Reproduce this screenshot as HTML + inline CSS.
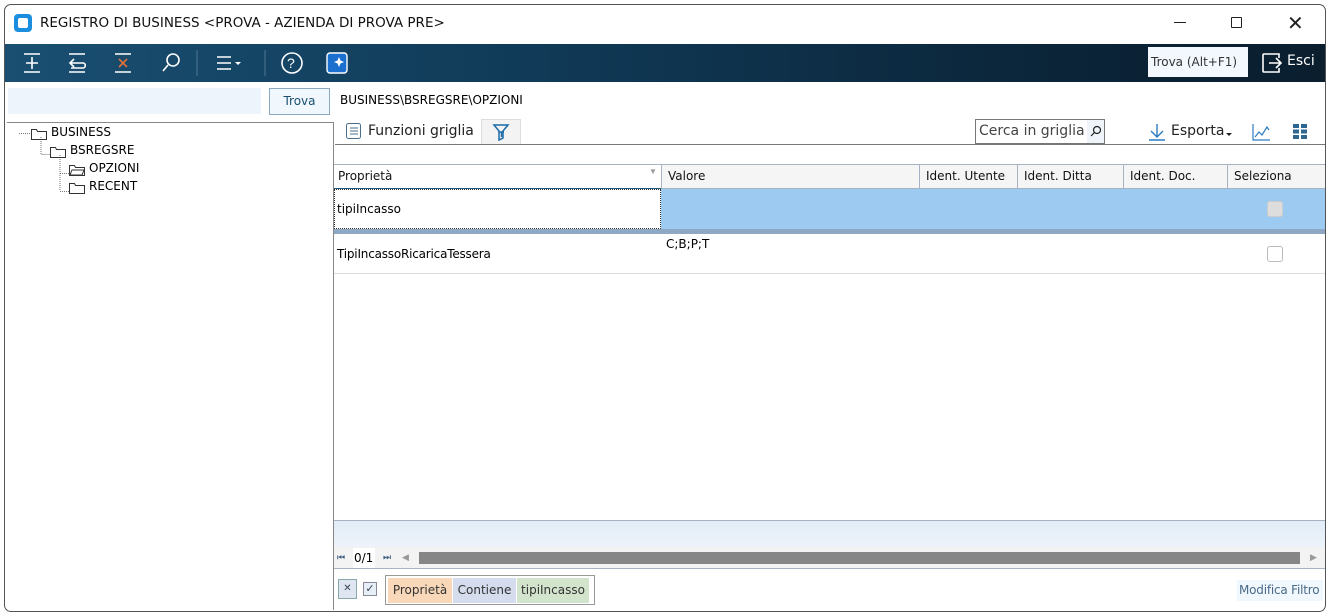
<!DOCTYPE html>
<html><head><meta charset="utf-8"><style>
*{box-sizing:border-box;margin:0;padding:0}
body{width:1328px;height:614px;background:#fff;font-family:"DejaVu Sans","Liberation Sans",sans-serif;font-size:12px;color:#000;position:relative;overflow:hidden}
.a{position:absolute}
.win{left:4px;top:4px;width:1322px;height:608px;border:1px solid #555;border-radius:7px;background:#fff;overflow:hidden}
.t{font-family:"Liberation Sans",sans-serif}
.hc{position:absolute;top:0;height:24px;line-height:22px;font-size:12px;padding-left:6px;border-left:1px solid #a8b4c4;color:#111}
</style></head><body>
<div class="a win">
<div class="a" style="left:9px;top:9px;width:18px;height:18px;background:#1c8ee0;border-radius:4px"></div>
<div class="a" style="left:13px;top:13px;width:10px;height:10px;background:#fff;border-radius:2px"></div>
<div class="a" style="left:35px;top:10px;font-size:13.5px;color:#111">REGISTRO DI BUSINESS &lt;PROVA - AZIENDA DI PROVA PRE&gt;</div>
<div class="a" style="left:1169px;top:17px;width:12px;height:1px;background:#222"></div>
<div class="a" style="left:1226px;top:12px;width:11px;height:11px;border:1px solid #222;border-radius:1px"></div>
<div class="a t" style="left:1282px;top:6px;font-size:20px;color:#222">✕</div>
<div class="a" style="left:0;top:39px;width:1322px;height:38px;background:linear-gradient(90deg,#1a4f72 0%,#103a57 40%,#0b2438 80%,#0a1e2e 100%)"></div>
<svg class="a" style="left:0;top:39px" width="360" height="38" viewBox="0 0 360 38" fill="none" stroke="#fff" stroke-width="1.6">
<path d="M19 10h16M19 28h16M27 13v12M21 19h12"/>
<path d="M64 10h16M64 28h16M78 19h-12M69 15l-4 4 4 4M78 19c3 0 3 5 0 5h-12"/>
<path d="M110 10h16M110 28h16"/><path d="M114 15l8 8M122 15l-8 8" stroke="#e2703a"/>
<circle cx="168" cy="16" r="6"/><path d="M163 21l-5 6"/>
<path d="M192 6v26" stroke="#3a6582"/>
<path d="M212 13h14M212 19h14M212 25h14"/><path d="M230 18l3 3 3-3z" fill="#fff" stroke="none"/>
<path d="M260 6v26" stroke="#3a6582"/>
<circle cx="287" cy="19" r="10"/><text x="282" y="24" font-size="14" fill="#fff" stroke="none" font-family="Liberation Sans">?</text>
<rect x="322" y="9" width="20" height="20" rx="3" fill="#1a6fcf" stroke="#fff" stroke-width="1.4"/>
<path d="M334 13l1.5 3.5 3.5 1.5-3.5 1.5-1.5 3.5-1.5-3.5-3.5-1.5 3.5-1.5z" fill="#fff" stroke="none"/>
</svg>
<div class="a" style="left:1143px;top:42px;width:100px;height:30px;background:#f2f8fd;color:#333;font-size:12px;line-height:30px;padding-left:3px">Trova (Alt+F1)</div>
<svg class="a" style="left:1255px;top:46px" width="24" height="24" fill="none" stroke="#fff" stroke-width="1.6"><path d="M10 3H4a1 1 0 0 0-1 1v16a1 1 0 0 0 1 1h6M9 12h11M16 7l5 5-5 5"/><path d="M10 3h9v4M19 17v4h-9"/></svg>
<div class="a" style="left:1282px;top:48px;color:#fff;font-size:14px">Esci</div>
<div class="a" style="left:3px;top:83px;width:253px;height:26px;background:#edf4fb"></div>
<div class="a" style="left:264px;top:83px;width:61px;height:27px;border:1px solid #8aa8c0;background:#f1f8fd;color:#1a4f72;text-align:center;line-height:25px">Trova</div>
<div class="a" style="left:2px;top:117px;width:327px;height:488px;border-top:1px solid #888;border-right:1px solid #888"></div>
<svg class="a" style="left:0;top:120px" width="140" height="75" fill="none" stroke="#333" stroke-width="1">
<path d="M14 8.5h12M36 12v17.5h9M55 30v36M55 48.5h9M55 66.5h9" stroke="#777" stroke-dasharray="1 1"/>
<path d="M26.5 4.5h5l1 2h9v8h-15z"/><path d="M45.5 22.5h5l1 2h9v8h-15z"/>
<path d="M64.5 40.5h5l1 2h9v8h-15z"/><path d="M67 45h12l-2 5h-12z" fill="#fff"/>
<path d="M64.5 58.5h5l1 2h9v8h-15z"/>
</svg>
<div class="a" style="left:46px;top:120px">BUSINESS</div>
<div class="a" style="left:65px;top:138px">BSREGSRE</div>
<div class="a" style="left:84px;top:156px">OPZIONI</div>
<div class="a" style="left:84px;top:174px">RECENT</div>
<div class="a" style="left:335px;top:88px">BUSINESS\BSREGSRE\OPZIONI</div>
<svg class="a" style="left:340px;top:117px" width="18" height="18" fill="none" stroke="#4a6f8c"><rect x="1.5" y="1.5" width="14" height="15" rx="2"/><path d="M5 6h8M5 9h8M5 12h8"/></svg>
<div class="a" style="left:363px;top:118px;font-size:14px;color:#222">Funzioni griglia</div>
<div class="a" style="left:476px;top:114px;width:40px;height:25px;background:#f3f3f3;border:1px solid #ddd;border-bottom:none"></div>
<svg class="a" style="left:487px;top:118px" width="18" height="18" fill="none" stroke="#1a6aa8" stroke-width="1.5"><path d="M2 2h14l-5 6v7l-4 2V8z"/><path d="M7 9h5M9.5 9v5"/></svg>
<div class="a" style="left:330px;top:139px;width:992px;height:1px;background:#777"></div>
<div class="a" style="left:970px;top:114px;width:130px;height:25px;border:1px solid #777;font-size:14px;color:#444;line-height:23px;padding-left:3px;overflow:hidden;white-space:nowrap">Cerca in griglia</div>
<div class="a" style="left:1082px;top:115px;width:17px;height:23px;background:#eef4fa"></div>
<svg class="a" style="left:1084px;top:120px" width="14" height="14" fill="none" stroke="#222" stroke-width="1.2"><circle cx="8" cy="5" r="3.5"/><path d="M5.5 7.5L2 11"/></svg>
<svg class="a" style="left:1143px;top:118px" width="20" height="18" fill="none" stroke="#2a7cc0" stroke-width="1.4"><path d="M9 1v12M3 8l6 6 6-6M1 17h16"/></svg>
<div class="a" style="left:1166px;top:118px;font-size:14px;color:#222">Esporta</div>
<div class="a" style="left:1221px;top:128px;border:3px solid transparent;border-top-color:#222"></div>
<svg class="a" style="left:1246px;top:117px" width="20" height="20" fill="none" stroke="#2a7cc0" stroke-width="1.2"><path d="M2 2v16h17M4 15l4-5 3 3 5-8 2 3"/></svg>
<svg class="a" style="left:1288px;top:119px" width="16" height="16" fill="#2e6690"><rect x="0" y="0" width="6" height="4"/><rect x="8" y="0" width="6" height="4"/><rect x="0" y="5.5" width="6" height="4"/><rect x="8" y="5.5" width="6" height="4"/><rect x="0" y="11" width="6" height="4"/><rect x="8" y="11" width="6" height="4"/></svg>
<div class="a" style="left:329px;top:159px;width:992px;height:25px;background:#f5f5f5;border-top:1px solid #a8b4c4;border-bottom:1px solid #a8b4c4">
<div class="hc" style="left:0;width:327px;border-left:none;background:#fff;border-bottom:2px solid #1c5a80;height:25px;padding-left:4px">Proprietà</div>
<div class="a t" style="left:315px;top:2px;font-size:8px;color:#999">▼</div>
<div class="hc" style="left:327px">Valore</div>
<div class="hc" style="left:585px">Ident. Utente</div>
<div class="hc" style="left:683px">Ident. Ditta</div>
<div class="hc" style="left:789px">Ident. Doc.</div>
<div class="hc" style="left:893px">Seleziona</div>
</div>
<div class="a" style="left:329px;top:184px;width:327px;height:40px;border:1px dotted #333;background:#fff"></div>
<div class="a" style="left:656px;top:184px;width:665px;height:40px;background:#9ccaf0"></div>
<div class="a" style="left:332px;top:197px">tipiIncasso</div>
<div class="a" style="left:1262px;top:196px;width:16px;height:16px;background:#ddd;border:1px solid #ccc;border-radius:3px"></div>
<div class="a" style="left:329px;top:224px;width:992px;height:5px;background:#8ea8c4"></div>
<div class="a" style="left:332px;top:242px;letter-spacing:-0.2px">TipiIncassoRicaricaTessera</div>
<div class="a" style="left:661px;top:232px">C;B;P;T</div>
<div class="a" style="left:1262px;top:241px;width:16px;height:16px;background:#fff;border:1px solid #bbb;border-radius:3px"></div>
<div class="a" style="left:329px;top:268px;width:992px;height:1px;background:#ddd"></div>
<div class="a" style="left:329px;top:515px;width:992px;height:1px;background:#a8b4c4"></div>
<div class="a" style="left:329px;top:516px;width:992px;height:26px;background:linear-gradient(#e2ecf7,#edf3f9)"></div>
<div class="a" style="left:329px;top:542px;width:992px;height:22px;background:#f3f3f3;border-bottom:1px solid #a8b4c4"></div>
<div class="a t" style="left:332px;top:547px;font-size:9px;color:#3a5a80">⏮</div>
<div class="a" style="left:348px;top:543px;width:22px;height:20px;background:#fff"></div>
<div class="a" style="left:349px;top:546px">0/1</div>
<div class="a t" style="left:378px;top:547px;font-size:9px;color:#3a5a80">⏭</div>
<div class="a t" style="left:397px;top:547px;font-size:9px;color:#999">◀</div>
<div class="a" style="left:414px;top:547px;width:881px;height:12px;background:#868686"></div>
<div class="a t" style="left:1305px;top:547px;font-size:9px;color:#999">▶</div>
<div class="a" style="left:333px;top:574px;width:19px;height:20px;background:#dfe6f1;border:1px solid #8aa;font-size:10px;text-align:center;line-height:18px;color:#345">✕</div>
<div class="a" style="left:358px;top:577px;width:14px;height:14px;border:1px solid #889;background:#e8eef6;font-size:11px;text-align:center;line-height:12px;color:#345">✓</div>
<div class="a" style="left:380px;top:570px;width:210px;height:30px;border:1px solid #999"></div>
<div class="a" style="left:383px;top:571px;width:205px;height:28px;background:#fff"></div>
<div class="a" style="left:383px;top:573px;width:64px;height:25px;background:#f8d8b8;line-height:25px;text-align:center;color:#333">Proprietà</div>
<div class="a" style="left:448px;top:573px;width:63px;height:25px;background:#d4dcee;line-height:25px;text-align:center;color:#333">Contiene</div>
<div class="a" style="left:512px;top:573px;width:72px;height:25px;background:#d2e4cc;line-height:25px;text-align:center;color:#333">tipiIncasso</div>
<div class="a" style="left:1232px;top:575px;width:86px;height:21px;background:#f1f8fd;color:#4a6a88;line-height:21px;padding-left:2px;white-space:nowrap;letter-spacing:-0.2px">Modifica Filtro</div>
</div>
</body></html>
